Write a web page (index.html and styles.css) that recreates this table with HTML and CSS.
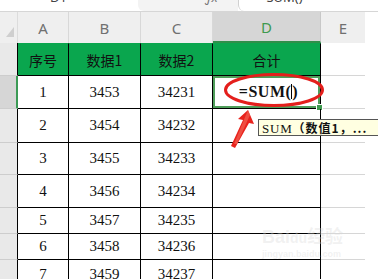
FILE: index.html
```html
<!DOCTYPE html>
<html>
<head>
<meta charset="utf-8">
<link rel="stylesheet" href="styles.css">
</head>
<body>
<div class="page">
  <div class="topbar">
    <div class="namebox"><span class="cut">D1</span></div>
    <div class="fxbox"><span class="cut fx">·&nbsp; ƒx</span></div>
    <div class="formula"><span class="cut">=SUM()</span></div>
  </div>
  <div class="sheet">
    <div class="ch corner"><span class="tri"></span></div>
    <div class="ch">A</div>
    <div class="ch">B</div>
    <div class="ch">C</div>
    <div class="ch chsel">D</div>
    <div class="ch">E</div>
    <div class="blank hdr"></div>

    <div class="rn"></div>
    <div class="c head first">序号</div>
    <div class="c head">数据1</div>
    <div class="c head">数据2</div>
    <div class="c head">合计</div>
    <div class="e"></div>
    <div class="blank"></div>

    <div class="rn rnsel r1"></div>
    <div class="c first r1">1</div>
    <div class="c r1">3453</div>
    <div class="c r1">34231</div>
    <div class="c r1 sel"><span class="fm">=SUM(<span class="caret"></span>)</span><span class="handle"></span></div>
    <div class="e r1"></div>
    <div class="blank r1"></div>

    <div class="rn r2"></div>
    <div class="c first r2">2</div>
    <div class="c r2">3454</div>
    <div class="c r2">34232</div>
    <div class="c r2"></div>
    <div class="e r2"></div>
    <div class="blank r2"></div>

    <div class="rn r3"></div>
    <div class="c first r3">3</div>
    <div class="c r3">3455</div>
    <div class="c r3">34233</div>
    <div class="c r3"></div>
    <div class="e r3"></div>
    <div class="blank r3"></div>

    <div class="rn r4"></div>
    <div class="c first r4">4</div>
    <div class="c r4">3456</div>
    <div class="c r4">34234</div>
    <div class="c r4"></div>
    <div class="e r4"></div>
    <div class="blank r4"></div>

    <div class="rn r5"></div>
    <div class="c first r5">5</div>
    <div class="c r5">3457</div>
    <div class="c r5">34235</div>
    <div class="c r5"></div>
    <div class="e r5"></div>
    <div class="blank r5"></div>

    <div class="rn r6"></div>
    <div class="c first r6">6</div>
    <div class="c r6">3458</div>
    <div class="c r6">34236</div>
    <div class="c r6"></div>
    <div class="e r6"></div>
    <div class="blank r6"></div>

    <div class="rn r7"></div>
    <div class="c first r7">7</div>
    <div class="c r7">3459</div>
    <div class="c r7">34237</div>
    <div class="c r7"></div>
    <div class="e r7"></div>
    <div class="blank r7"></div>
  </div>

  <svg class="ellipse" width="110" height="42" viewBox="0 0 110 42">
    <ellipse cx="54" cy="19" rx="48.5" ry="15.5" fill="none" stroke="#e41f1c" stroke-width="3"/>
  </svg>
  <svg class="arrow" width="30" height="42" viewBox="0 0 30 42">
    <polygon points="20,0 26,14 21,13 7,38 3,36 15,10 10,9" fill="#e8231d"/>
    <polygon points="20,0 22,5 9,34 6,34" fill="#f36a5c" opacity="0.6"/>
  </svg>
  <div class="tip"><span class="tsum">SUM</span><b>（数值1，...</b></div>
  <div class="wm"><span class="wm1">Bai<span class="wmdu">du</span>经验</span><span class="wm2">jingyan.baidu.com</span></div>
</div>
</body>
</html>
```

FILE: styles.css
```css
html, body {
  margin: 0;
  padding: 0;
  background: #ffffff;
}
.page {
  position: relative;
  width: 378px;
  height: 279px;
  overflow: hidden;
  font-family: "Liberation Serif", "Noto Sans CJK SC", serif;
}
.topbar {
  display: flex;
  height: 12px;
  border-bottom: 1px solid #d6d6d6;
  box-sizing: border-box;
}
.namebox {
  width: 138px;
  background: #fff;
  overflow: hidden;
  padding-left: 50px;
  box-sizing: border-box;
}
.fxbox {
  width: 100px;
  background: #f3f3f3;
  overflow: hidden;
  padding-left: 58px;
  box-sizing: border-box;
  border-radius: 0 0 0 6px;
}
.formula {
  flex: 1;
  background: #fff;
  overflow: hidden;
  padding-left: 20px;
  border-left: 1px solid #d0d0d0;
  border-radius: 0 0 0 6px;
}
.cut {
  display: block;
  font-family: "Noto Sans", sans-serif;
  font-size: 13px;
  line-height: 13px;
  margin-top: -9px;
  color: #444;
}
.fx { color: #777; font-style: italic; }

.sheet {
  display: grid;
  grid-template-columns: 18px 51px 72px 72px 108px 44px 1fr;
  grid-template-rows: 31px 33px 33px 34px 32px 33px 26px 26px 30px;
}
.ch {
  background: #efefef;
  border-right: 1px solid #d8d8d8;
  color: #707070;
  font-family: "Noto Sans", sans-serif;
  font-size: 15px;
  display: flex;
  align-items: center;
  justify-content: center;
  box-sizing: border-box;
}
.corner {
  background: #efefef;
  position: relative;
  border-right: 1px solid #dcdcdc;
}
.tri {
  position: absolute;
  right: 3px;
  bottom: 6px;
  width: 0;
  height: 0;
  border-left: 8px solid transparent;
  border-bottom: 10px solid #cfcfcf;
}
.chsel {
  background: #d6d6d6;
  color: #3f9a4f;
  border-bottom: 2px solid #2f8f4a;
  border-right: 1px solid #c8c8c8;
}
.blank.hdr { background: #fff; }
.ch:nth-child(6) { border-right: none; }

.rn {
  background: #e9e9e9;
  border-bottom: 1px solid #cdcdcd;
  border-right: 1px solid #000;
  box-sizing: border-box;
}
.rnsel {
  background: #d6d6d6;
  border-right: 2px solid #3b9a55;
}
.c {
  border-right: 1px solid #000;
  border-bottom: 1px solid #000;
  box-sizing: border-box;
  display: flex;
  align-items: center;
  justify-content: center;
  font-family: "Liberation Serif", serif;
  font-size: 15px;
  color: #111;
  position: relative;
}
.head {
  background: #0aa64e;
  font-family: "Noto Sans CJK SC", sans-serif;
  font-size: 14px;
  color: #111;
  border-top: 1px solid #0aa64e;
}
.e {
  border-bottom: 1px solid #d6d6d6;
}
.blank { background: #fff; }

.sel {
  box-shadow: inset 0 0 0 2px #4f9e5a;
}
.fm {
  font-family: "Liberation Serif", serif;
  font-weight: bold;
  font-size: 16px;
  letter-spacing: 0.5px;
  margin-left: 4px;
  white-space: nowrap;
}
.caret {
  display: inline-block;
  vertical-align: middle;
  width: 1px;
  height: 15px;
  background: #000;
  margin: -3px 0 0 0;
}
.handle {
  position: absolute;
  right: -3px;
  bottom: -3px;
  width: 5px;
  height: 5px;
  background: #3f9a4f;
  border: 1px solid #fff;
}

.ellipse {
  position: absolute;
  left: 220px;
  top: 71px;
}
.arrow {
  position: absolute;
  left: 228px;
  top: 110px;
}
.tip {
  position: absolute;
  left: 258px;
  top: 119px;
  height: 17px;
  width: 130px;
  box-sizing: border-box;
  background: #ffffe1;
  border: 1px solid #555;
  font-size: 13px;
  line-height: 15px;
  padding-left: 3px;
  color: #111;
  white-space: nowrap;
}
.tsum {
  font-family: "Liberation Serif", serif;
  letter-spacing: 0.8px;
}
.tip b {
  font-family: "Noto Sans CJK SC", sans-serif;
  font-weight: bold;
  font-size: 12px;
  letter-spacing: 1px;
}
.wm {
  position: absolute;
  left: 262px;
  top: 226px;
  display: flex;
  flex-direction: column;
  color: rgba(215, 215, 215, 0.35);
  font-family: "Liberation Sans", "Noto Sans CJK SC", sans-serif;
  pointer-events: none;
}
.wm1 {
  font-size: 18px;
  font-weight: bold;
  line-height: 22px;
}
.wmdu { font-size: 14px; }
.wm2 {
  font-size: 9px;
  font-weight: bold;
  line-height: 10px;
}
```
